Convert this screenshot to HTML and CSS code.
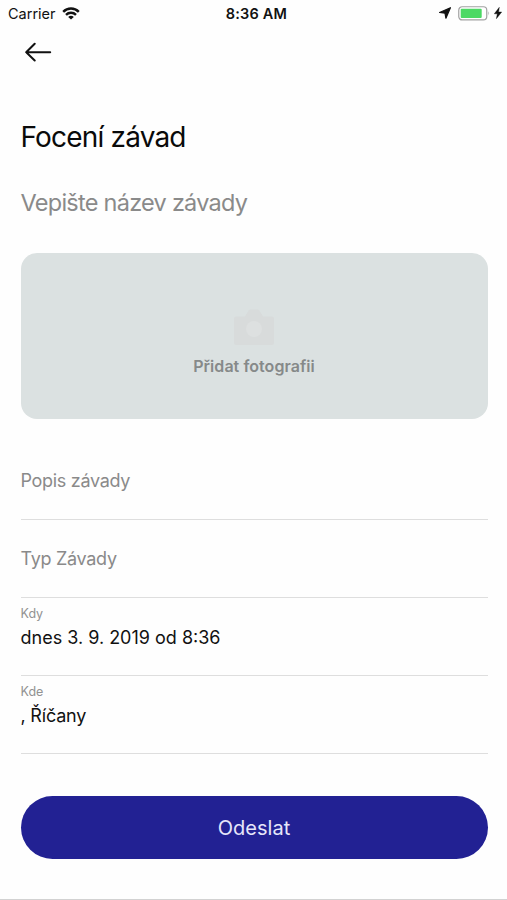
FILE: index.html
```html
<!DOCTYPE html>
<html lang="cs">
<head>
<meta charset="utf-8">
<title>Focení závad</title>
<link rel="stylesheet" href="styles.css">
</head>
<body>
<div class="screen">
  <header class="status">
    <div class="status-left">
      <span class="carrier">Carrier</span>
      <svg class="wifi" width="18" height="13" viewBox="0 0 18 13" fill="none" stroke="#111" stroke-width="2.4">
        <path d="M1.200 4.800C5.500.4 12.500.4 16.800 4.800"/>
        <path d="M4 7.800c2.800-2.800 7.200-2.800 10 0"/>
        <path d="M9 12.600 6.200 9.900c1.500-1.500 4.100-1.500 5.600 0z" fill="#111" stroke="none"/>
      </svg>
    </div>
    <span class="clock">8:36 AM</span>
    <div class="status-right">
      <svg class="locate" width="12" height="12" viewBox="0 0 12 12"><path d="M11.400.7 6.900 11.200 6 6.200.6 5.500z" fill="#111" stroke="#111" stroke-width="1.2" stroke-linejoin="round"/></svg>
      <svg class="battery" width="33" height="15" viewBox="0 0 33 15">
        <rect x=".75" y=".75" width="28" height="13.2" rx="3.4" fill="#fff" stroke="#a2a2a2" stroke-width="1.2"/>
        <rect x="2.700" y="2.700" width="21" height="9.300" rx="1" fill="#4cd964"/>
        <path d="M30.400 5.200q1.800 2.200 0 4.400z" fill="#a2a2a2"/>
      </svg>
      <svg class="bolt" width="8" height="12" viewBox="0 0 8 12"><path d="M5.300.3.3 6.800h3L2.400 11.700 7.700 5H4.600z" fill="#111" stroke="#111" stroke-width=".4"/></svg>
    </div>
  </header>
  <nav class="nav">
    <svg width="28" height="20" viewBox="0 0 28 20" fill="none" stroke="#111" stroke-width="2" stroke-linecap="round" stroke-linejoin="round"><path d="M25.200 10.300H1.200M9.700 1.700 1.200 10.300 9.700 18.500"/></svg>
  </nav>
  <main class="content">
    <h1 class="title">Focení závad</h1>
    <div class="subtitle">Vepište název závady</div>
    <div class="photo">
      <svg width="40" height="36" viewBox="0 0 40 36">
        <path d="M2 7.500h9L14.500 1.500Q15.200.5 16.500.5h7q1.300 0 2 1L29 7.500h9q2 0 2 2V34q0 2-2 2H2q-2 0-2-2V9.500q0-2 2-2z" fill="#d8dbdb"/>
        <circle cx="20" cy="20" r="8" fill="#dde0e0"/>
      </svg>
      <span class="photo-text">Přidat fotografii</span>
    </div>
    <div class="fields">
      <div class="field empty"><span class="placeholder">Popis závady</span></div>
      <div class="field empty"><span class="placeholder">Typ Závady</span></div>
      <div class="field"><span class="label">Kdy</span><span class="value">dnes 3. 9. 2019 od 8:36</span></div>
      <div class="field"><span class="label">Kde</span><span class="value place">, Říčany</span></div>
    </div>
    <button class="submit">Odeslat</button>
  </main>
  <div class="bottom-line"></div>
</div>
</body>
</html>
```
FILE: styles.css
```css
* { box-sizing: border-box; }
body {
  margin: 0;
  background: #fefefe;
  color: #111;
  font-family: Inter, "Liberation Sans", sans-serif;
}
.screen {
  display: flex;
  flex-direction: column;
  height: 900px;
  overflow: hidden;
}
.status {
  display: grid;
  grid-template-columns: 1fr auto 1fr;
  align-items: center;
  height: 26px;
  padding: 0 5px 0 8px;
}
.status-left, .status-right { display: flex; align-items: center; }
.status-left { gap: 6px; }
.status-right { justify-content: flex-end; }
.battery { margin: 0 3px 0 7px; }
.carrier { font-size: 14.5px; }
.clock { padding-left: 3px; font-size: 14.5px; font-weight: 600; letter-spacing: .2px; }
.nav { height: 94px; padding: 16px 0 0 25px; }
.nav svg { display: block; }
.content {
  display: flex;
  flex-direction: column;
  padding: 0 19.5px 0 20.5px;
}
.title {
  margin: 0;
  font-size: 28px;
  font-weight: 400;
  line-height: 34px;
  letter-spacing: -.82px;
  color: #0a0a0a;
}
.subtitle {
  margin-top: 34px;
  font-size: 23.5px;
  line-height: 30px;
  letter-spacing: -.74px;
  color: #8a8a8a;
}
.photo {
  display: flex;
  flex-direction: column;
  align-items: center;
  height: 166px;
  margin-top: 35.4px;
  padding-top: 55.6px;
  border-radius: 16px;
  background: #dbe1e1;
}
.photo-text {
  margin-top: 11px;
  font-size: 16px;
  font-weight: 600;
  line-height: 20px;
  letter-spacing: .05px;
  color: #868989;
}
.fields { margin-top: 22.6px; }
.field {
  display: flex;
  flex-direction: column;
  gap: 4px;
  height: 78px;
  padding-top: 8px;
  border-bottom: 1px solid #dedede;
}
.empty { padding-top: 27px; }
.placeholder, .value { font-size: 18px; line-height: 24px; }
.placeholder { color: #8a8a8a; letter-spacing: -.3px; }
.place { letter-spacing: -.2px; }
.label { font-size: 12.5px; line-height: 16px; color: #929292; }
.submit {
  height: 63px;
  margin-top: 42px;
  padding: 2px 0 0;
  border: 0;
  border-radius: 32px;
  background: #222193;
  color: #e6e6fa;
  font: 400 20px/61px Inter, "Liberation Sans", sans-serif;
}
.bottom-line { height: 1px; margin-top: auto; background: #d2d2d2; }
```
